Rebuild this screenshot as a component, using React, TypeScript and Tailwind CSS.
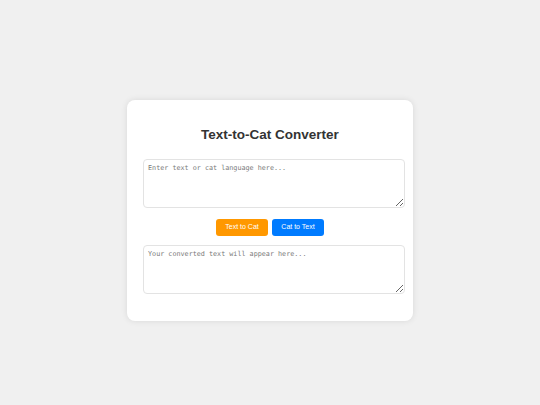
export default function App() {
  return (
    <div className="min-h-screen bg-[#f0f0f0] pt-[100px] font-['Liberation_Sans',Arial,sans-serif]">
      <div className="mx-auto w-[286px] rounded-[8px] bg-white pb-[27px] pl-4 pr-2 pt-[25px] shadow-[0_0_6px_rgba(0,0,0,0.1)]">
        <h1 className="mr-2 text-center text-[13.5px] font-bold leading-[20px] text-[#333]">
          Text-to-Cat Converter
        </h1>
        <textarea
          className="mt-[14px] block h-[49px] w-[262px] rounded-[4px] border border-[#e3e3e3] px-[4px] py-[4px] font-['DejaVu_Sans_Mono',monospace] text-[6.75px] leading-[9px] text-[#333] outline-none placeholder:text-[#7a7a7a]"
          placeholder="Enter text or cat language here..."
        />
        <div className="mr-2 mt-[11px] flex justify-center gap-[4px]">
          <button className="h-[17px] w-[52px] rounded-[3px] bg-[#ff9800] text-[7px] text-white">
            Text to Cat
          </button>
          <button className="h-[17px] w-[52px] rounded-[3px] bg-[#007bff] text-[7px] text-white">
            Cat to Text
          </button>
        </div>
        <textarea
          readOnly
          className="mt-[9px] block h-[49px] w-[262px] rounded-[4px] border border-[#e3e3e3] px-[4px] py-[4px] font-['DejaVu_Sans_Mono',monospace] text-[6.75px] leading-[9px] text-[#333] outline-none placeholder:text-[#7a7a7a]"
          placeholder="Your converted text will appear here..."
        />
      </div>
    </div>
  );
}
